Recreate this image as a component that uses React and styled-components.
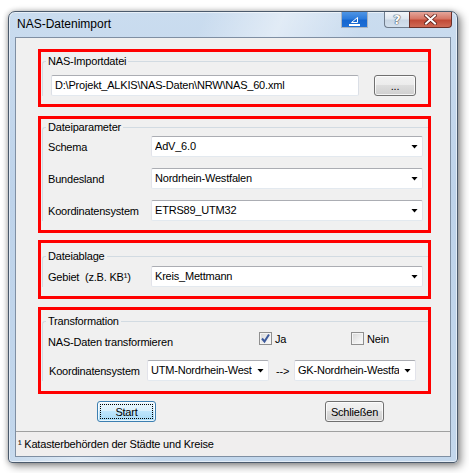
import styled, { createGlobalStyle } from "styled-components";

const GlobalStyle = createGlobalStyle`
  body {
    margin: 0;
    background: #ffffff;
    font-family: "Liberation Sans", Arial, sans-serif;
  }
`;

const Combo = ({ width, children }) => (
  <ComboBox $width={width}>
    <ComboText>{children}</ComboText>
    <ComboArrow />
  </ComboBox>
);

const App = () => {
  return (
    <Page>
      <GlobalStyle />
      <Window>
        <TitleBar>
          <Title>NAS-Datenimport</Title>
          <Spacer />
          <MinButton>
            <svg width="13" height="10" viewBox="0 0 13 10">
              <path d="M3.5 6.5 L9.5 1.5 L9.5 6.5 Z" fill="none" stroke="#fff" strokeWidth="1" />
              <rect x="1" y="8" width="11" height="2" fill="#fff" />
            </svg>
          </MinButton>
          <HelpButton>?</HelpButton>
          <CloseButton>
            <svg width="13" height="11" viewBox="0 0 13 11">
              <path d="M2 1.5 L11 9.5 M11 1.5 L2 9.5" stroke="#5a1d16" strokeWidth="3.6" strokeLinecap="square" />
              <path d="M2 1.5 L11 9.5 M11 1.5 L2 9.5" stroke="#ffffff" strokeWidth="2" strokeLinecap="square" />
            </svg>
          </CloseButton>
        </TitleBar>

        <Client>
          <Body>
            <RedBox $height={58} $top={11}>
              <Group $top={2}>
                <Legend>NAS-Importdatei</Legend>
                <FileRow>
                  <TextField>D:\Projekt_ALKIS\NAS-Daten\NRW\NAS_60.xml</TextField>
                  <Button $width={42}>...</Button>
                </FileRow>
              </Group>
            </RedBox>

            <RedBox $height={117} $top={9}>
              <Group $top={1}>
                <Legend>Dateiparameter</Legend>
                <Rows $pad={2}>
                  <FieldRow>
                    <Label>Schema</Label>
                    <Combo width={272}>AdV_6.0</Combo>
                  </FieldRow>
                  <FieldRow>
                    <Label>Bundesland</Label>
                    <Combo width={272}>Nordrhein-Westfalen</Combo>
                  </FieldRow>
                  <FieldRow>
                    <Label>Koordinatensystem</Label>
                    <Combo width={272}>ETRS89_UTM32</Combo>
                  </FieldRow>
                </Rows>
              </Group>
            </RedBox>

            <RedBox $height={59} $top={7}>
              <Group $top={6}>
                <Legend>Dateiablage</Legend>
                <Rows $pad={3}>
                  <FieldRow>
                    <Label>{"Gebiet  (z.B. KB¹)"}</Label>
                    <Combo width={272}>Kreis_Mettmann</Combo>
                  </FieldRow>
                </Rows>
              </Group>
            </RedBox>

            <RedBox $height={87} $top={8}>
              <Group $top={4}>
                <Legend>Transformation</Legend>
                <CheckRow>
                  <CheckLabel>NAS-Daten transformieren</CheckLabel>
                  <CheckItem $left={259}>
                    <CheckBox>
                      <svg width="11" height="11" viewBox="0 0 11 11">
                        <path d="M2 5.5 L4.5 8.5 L9 1.5" fill="none" stroke="#3d5a9c" strokeWidth="2" />
                      </svg>
                    </CheckBox>
                    Ja
                  </CheckItem>
                  <CheckItem $left={351}>
                    <CheckBox />
                    Nein
                  </CheckItem>
                </CheckRow>
                <TransformRow>
                  <Label $width={99}>Koordinatensystem</Label>
                  <Combo width={122}>UTM-Nordrhein-Westfalen</Combo>
                  <ArrowText>--&gt;</ArrowText>
                  <Combo width={122}>GK-Nordrhein-Westfalen</Combo>
                </TransformRow>
              </Group>
            </RedBox>

            <ButtonRow>
              <Button $width={59} $default>Start</Button>
              <Button $width={59}>Schließen</Button>
            </ButtonRow>
          </Body>
          <StatusBar>¹ Katasterbehörden der Städte und Kreise</StatusBar>
        </Client>
      </Window>
    </Page>
  );
};

const Page = styled.div`
  width: 469px;
  height: 473px;
  box-sizing: border-box;
  padding: 11px 0 0 8px;
  overflow: hidden;
`;

const Window = styled.div`
  width: 450px;
  height: 452px;
  box-sizing: border-box;
  display: flex;
  flex-direction: column;
  padding: 0 6px 5px 6px;

  border: 1px solid #4b5a6c;
  border-radius: 7px 7px 4px 4px;
  background: linear-gradient(115deg, rgba(255, 255, 255, 0) 30%, rgba(255, 255, 255, 0.45) 42%, rgba(255, 255, 255, 0) 55%),
    linear-gradient(180deg, #cadcef 0%, #bed3ea 40%, #c3d7ec 100%);
  box-shadow: inset 0 0 0 1px rgba(255, 255, 255, 0.55), 3px 3px 9px rgba(0, 0, 0, 0.45),
    -1px 0 5px rgba(0, 0, 0, 0.2);
`;

const TitleBar = styled.div`
  height: 25px;
  display: flex;
  align-items: flex-start;
  padding-left: 2px;
`;

const Title = styled.span`
  font-family: "Liberation Sans", Arial, sans-serif;
  font-size: 12px;
  line-height: 14px;
  color: #000000;
  margin-top: 5px;
`;

const Spacer = styled.div`
  flex: 1;
`;

const CaptionButton = styled.div`
  height: 16px;
  box-sizing: border-box;
  display: flex;
  align-items: center;
  justify-content: center;
`;

const MinButton = styled(CaptionButton)`
  width: 27px;
  margin-right: 16px;
  background: linear-gradient(180deg, #4f95e4 0%, #2c7bdc 45%, #1566d0 55%, #1e6fd6 100%);
  border: 1px solid #a9b4c2;
  border-top: none;
  padding-top: 2px;
`;

const HelpButton = styled(CaptionButton)`
  width: 25px;
  background: linear-gradient(180deg, #f3f6fa 0%, #dfe7f0 45%, #c9d6e4 55%, #d3e0ee 100%);
  border: 1px solid #6f7c8c;
  border-top: none;
  border-right: none;
  border-radius: 0 0 0 4px;
  font-family: "DejaVu Sans", sans-serif;
  font-size: 13px;
  font-weight: bold;
  color: #ffffff;
  text-shadow: 0 0 1px #3c4757, 0 0 1px #3c4757, 0 0 1px #3c4757;
`;

const CloseButton = styled(CaptionButton)`
  width: 43px;
  margin-right: -1px;
  background: linear-gradient(180deg, #e4a69b 0%, #d67766 45%, #c24a36 55%, #cf6a55 100%);
  border: 1px solid #6b2f27;
  border-top: none;
  border-radius: 0 0 4px 0;
`;

const Client = styled.div`
  flex: 1;
  display: flex;
  flex-direction: column;
  background: #f0f0f0;
  border: 1px solid #7f8fa3;
`;

const Body = styled.div`
  display: flex;
  flex-direction: column;
  padding-left: 22px;
`;

const RedBox = styled.div`
  width: 393px;
  height: ${(p) => p.$height}px;
  margin-top: ${(p) => p.$top}px;
  box-sizing: border-box;
  border: 3px solid #ff0000;
  padding-left: 1px;
  overflow: hidden;
`;

const Group = styled.fieldset`
  margin: ${(p) => p.$top}px 0 0 0;
  padding: 0 0 0 5px;
  border: 1px solid #d2dbe2;
  border-right: none;
  border-bottom: none;
  border-radius: 3px 0 0 0;
  min-width: 0;
`;

const Legend = styled.legend`
  padding: 0 2px;
  margin-left: -2px;
  font-size: 11px;
  line-height: 14px;
  letter-spacing: -0.2px;
  color: #000000;
`;

const FileRow = styled.div`
  display: flex;
  gap: 15px;
  padding: 7px 0 0 3px;
`;

const TextField = styled.div`
  width: 308px;
  height: 21px;
  box-sizing: border-box;
  padding: 0 3px;
  background: #ffffff;
  border: 1px solid #dbdfe6;
  border-top-color: #abadb3;
  border-bottom-color: #e3e9ef;
  border-radius: 2px;
  font-size: 11px;
  line-height: 19px;
  letter-spacing: -0.2px;
  color: #000000;
  white-space: nowrap;
  overflow: hidden;
`;

const Button = styled.div`
  width: ${(p) => p.$width}px;
  height: 21px;
  box-sizing: border-box;
  position: relative;
  display: flex;
  align-items: center;
  justify-content: center;
  border: 1px solid ${(p) => (p.$default ? "#3c7fb1" : "#707070")};
  border-radius: 3px;
  background: ${(p) =>
    p.$default
      ? "linear-gradient(180deg, #eaf6fd 0%, #d9f0fc 50%, #bee6fd 50%, #a7d9f5 100%)"
      : "linear-gradient(180deg, #f2f2f2 0%, #ebebeb 50%, #dddddd 50%, #cfcfcf 100%)"};
  box-shadow: inset 0 0 0 1px rgba(255, 255, 255, 0.75);
  font-size: 11px;
  letter-spacing: -0.2px;
  color: #000000;

  &::after {
    content: "";
    display: ${(p) => (p.$default ? "block" : "none")};
    position: absolute;
    inset: 2px;
    border: 1px dotted #000000;
  }
`;

const Rows = styled.div`
  display: flex;
  flex-direction: column;
  gap: 11px;
  padding-top: ${(p) => p.$pad}px;
`;

const FieldRow = styled.div`
  display: flex;
  align-items: center;
`;

const Label = styled.span`
  width: ${(p) => p.$width || 103}px;
  flex-shrink: 0;
  padding-left: ${(p) => (p.$width ? 1 : 0)}px;
  box-sizing: border-box;
  font-size: 11px;
  letter-spacing: -0.2px;
  color: #000000;
  white-space: pre;
`;

const ComboBox = styled.div`
  width: ${(p) => p.$width}px;
  height: 21px;
  box-sizing: border-box;
  flex-shrink: 0;
  display: flex;
  align-items: center;
  padding: 0 4px 0 3px;
  background: #ffffff;
  border: 1px solid #e2e3ea;
  border-top-color: #abadb3;
  border-bottom-color: #e3e9ef;
  border-radius: 2px;
`;

const ComboText = styled.span`
  flex: 1;
  min-width: 0;
  overflow: hidden;
  white-space: nowrap;
  margin-right: 5px;
  font-size: 11px;
  line-height: 19px;
  letter-spacing: -0.2px;
  color: #000000;
`;

const ComboArrow = styled.span`
  width: 7px;
  height: 4px;
  flex-shrink: 0;
  background: #000000;
  clip-path: polygon(0 0, 100% 0, 50% 100%);
`;

const CheckRow = styled.div`
  position: relative;
  height: 18px;
  margin-top: 2px;
  display: flex;
  align-items: center;
`;

const CheckLabel = styled.span`
  font-size: 11px;
  letter-spacing: -0.2px;
  color: #000000;
  margin-top: 5px;
`;

const CheckItem = styled.label`
  position: absolute;
  left: ${(p) => p.$left - 48}px;
  top: 2px;
  display: flex;
  align-items: center;
  gap: 3px;
  font-size: 11px;
  letter-spacing: -0.2px;
  color: #000000;
`;

const CheckBox = styled.span`
  width: 13px;
  height: 13px;
  box-sizing: border-box;
  display: flex;
  align-items: center;
  justify-content: center;
  border: 1px solid #8f8f8f;
  background: linear-gradient(135deg, #d6d6d6 0%, #efefef 60%, #fbfbfb 100%);
  box-shadow: inset 0 0 0 1px #f4f4f4;
`;

const TransformRow = styled.div`
  display: flex;
  align-items: center;
  margin-top: 12px;
`;

const ArrowText = styled.span`
  width: 25px;
  padding-left: 7px;
  box-sizing: border-box;
  font-size: 11px;
  letter-spacing: -0.2px;
  color: #000000;
`;

const ButtonRow = styled.div`
  display: flex;
  gap: 169px;
  margin-top: 7px;
  padding-left: 59px;
`;

const StatusBar = styled.div`
  margin-top: auto;
  height: 25px;
  box-sizing: border-box;
  border-top: 1px solid #a0a0a0;
  background: #f0eeee;
  padding-left: 2px;
  font-size: 11px;
  line-height: 24px;
  letter-spacing: -0.2px;
  color: #000000;
`;

export default App;
